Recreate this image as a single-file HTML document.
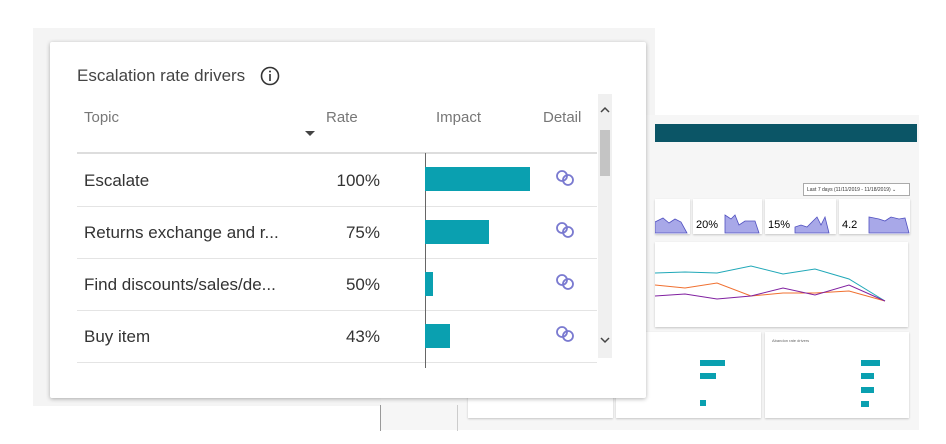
<!DOCTYPE html><html><head><style>
*{margin:0;padding:0;box-sizing:border-box}
body{width:946px;height:444px;background:#fff;position:relative;overflow:hidden;font-family:"Liberation Sans",sans-serif}
.a{position:absolute}
.dash{left:381px;top:115px;width:538px;height:315px;background:#f6f6f6}
.card{background:#fff;box-shadow:0 1px 2px rgba(0,0,0,.2)}
.t{font-size:4px;color:#666}
.main{left:50px;top:42px;width:596px;height:356px;background:#fff;box-shadow:0 1px 4px rgba(0,0,0,.3);border-radius:2px}
.row{position:absolute;left:27px;width:520px;height:1px;background:#e4e4e4}
.tx{position:absolute;font-size:17px;color:#333}
.r{position:absolute;font-size:17px;color:#333;right:266px;text-align:right}
.h{position:absolute;font-size:15px;color:#777}
.bar{position:absolute;left:375px;height:24px;background:#0aa0b0}
</style></head><body>
<div class="a" style="left:33px;top:28px;width:622px;height:378px;background:#f4f4f4"></div>
<div class="a dash"></div>
<div class="a" style="left:655px;top:124px;width:262px;height:18px;background:#0b5566"></div>
<div class="a" style="left:803px;top:183px;width:107px;height:13px;border:1px solid #aaa;background:#fff;font-size:5px;color:#333;padding:3px 3px">Last 7 days (11/11/2019 - 11/18/2019) ⌄</div>
<div class="a card" style="left:655px;top:199px;width:35px;height:35px"></div>
<div class="a card" style="left:693px;top:199px;width:69px;height:35px"><span class="a" style="left:3px;top:20px;font-size:11px">20%</span></div>
<div class="a card" style="left:765px;top:199px;width:71px;height:35px"><span class="a" style="left:3px;top:20px;font-size:11px">15%</span></div>
<div class="a card" style="left:839px;top:199px;width:71px;height:35px"><span class="a" style="left:3px;top:20px;font-size:11px">4.2</span></div>
<svg class="a" style="left:655px;top:205px" width="260" height="30"><g fill="#a8a8e8" stroke="#5050c0" stroke-width=".8"><path d="M0 28V17L8 13 14 18 20 14 26 17 32 28Z"/><path d="M70 28V10L76 14 80 10 84 20 90 16 100 16 104 28Z"/><path d="M140 28V22L146 20 152 22 158 16 162 12 166 20 170 12 174 28Z"/><path d="M214 28V12L224 14 230 16 236 12 244 14 250 13 254 28Z"/></g></svg>
<div class="a card" style="left:655px;top:242px;width:253px;height:85px"></div>
<svg class="a" style="left:655px;top:265px" width="250" height="60"><polyline fill="none" stroke="#20a8b8" stroke-width="1" points="0,8 30,7 62,8 96,1 128,9 160,4 194,14 230,36"/><polyline fill="none" stroke="#f07030" stroke-width="1" points="0,20 30,23 62,18 96,31 128,28 160,28 194,26 230,36"/><polyline fill="none" stroke="#8020a0" stroke-width="1" points="0,31 30,29 62,34 96,31 128,23 160,30 194,20 230,36"/></svg>
<div class="a card" style="left:468px;top:332px;width:145px;height:86px"></div>
<div class="a card" style="left:616px;top:332px;width:145px;height:86px"></div>
<div class="a card" style="left:765px;top:332px;width:144px;height:86px"><span class="a t" style="left:7px;top:6px">Abandon rate drivers</span>
<div class="a" style="left:96px;top:28px;width:19px;height:6px;background:#0aa0b0"></div><div class="a" style="left:96px;top:41px;width:13px;height:6px;background:#0aa0b0"></div><div class="a" style="left:96px;top:55px;width:13px;height:6px;background:#0aa0b0"></div><div class="a" style="left:96px;top:69px;width:8px;height:6px;background:#0aa0b0"></div></div>
<div class="a" style="left:700px;top:360px;width:25px;height:6px;background:#0aa0b0"></div><div class="a" style="left:700px;top:373px;width:16px;height:6px;background:#0aa0b0"></div><div class="a" style="left:700px;top:400px;width:6px;height:6px;background:#0aa0b0"></div>
<div class="a" style="left:380px;top:405px;width:1px;height:26px;background:#999"></div>
<div class="a" style="left:457px;top:405px;width:1px;height:26px;background:#ccc"></div>

<div class="a main">
<div class="tx" style="left:27px;top:24px;font-size:17px;color:#444">Escalation rate drivers</div>
<svg class="a" style="left:209px;top:23px" width="22" height="22"><circle cx="11" cy="11" r="8.5" fill="none" stroke="#333" stroke-width="1.6"/><rect x="10.2" y="9" width="1.6" height="7" fill="#333"/><circle cx="11" cy="6.5" r="1" fill="#333"/></svg>
<div class="h" style="left:34px;top:67px">Topic</div>
<div class="h" style="left:276px;top:67px">Rate</div>
<div class="h" style="left:386px;top:67px">Impact</div>
<div class="h" style="left:493px;top:67px">Detail</div>
<svg class="a" style="left:255px;top:89px" width="10" height="6"><path d="M0 0H10L5 5Z" fill="#444"/></svg>
<div class="row" style="top:110px;height:2px;background:#ddd"></div>
<div class="row" style="top:164px"></div><div class="row" style="top:216px"></div><div class="row" style="top:268px"></div><div class="row" style="top:320px"></div>
<div class="a" style="left:375px;top:111px;width:1px;height:215px;background:#666"></div>
<div class="tx" style="left:34px;top:129px">Escalate</div><div class="r" style="top:129px">100%</div>
<div class="tx" style="left:34px;top:181px">Returns exchange and r...</div><div class="r" style="top:181px">75%</div>
<div class="tx" style="left:34px;top:233px">Find discounts/sales/de...</div><div class="r" style="top:233px">50%</div>
<div class="tx" style="left:34px;top:285px">Buy item</div><div class="r" style="top:285px">43%</div>
<div class="bar" style="top:125px;width:105px"></div>
<div class="bar" style="top:178px;width:64px"></div>
<div class="bar" style="top:230px;width:8px"></div>
<div class="bar" style="top:282px;width:25px"></div>
<svg class="a" style="left:505px;top:128px" width="22" height="210"><g fill="none" stroke="#7a7ad0" stroke-width="1.8"><g><circle cx="7" cy="6" r="5"/><circle cx="13" cy="10" r="5"/></g><g transform="translate(0,52)"><circle cx="7" cy="6" r="5"/><circle cx="13" cy="10" r="5"/></g><g transform="translate(0,104)"><circle cx="7" cy="6" r="5"/><circle cx="13" cy="10" r="5"/></g><g transform="translate(0,156)"><circle cx="7" cy="6" r="5"/><circle cx="13" cy="10" r="5"/></g></g></svg>
<div class="a" style="left:548px;top:52px;width:14px;height:264px;background:#f0f0f0"></div>
<div class="a" style="left:550px;top:88px;width:10px;height:46px;background:#c4c4c4"></div>
<svg class="a" style="left:550px;top:64px" width="10" height="280"><g fill="none" stroke="#444" stroke-width="1.5"><path d="M1 6L5 2 9 6"/><path d="M1 232L5 236 9 232"/></g></svg>
</div>
</body></html>
